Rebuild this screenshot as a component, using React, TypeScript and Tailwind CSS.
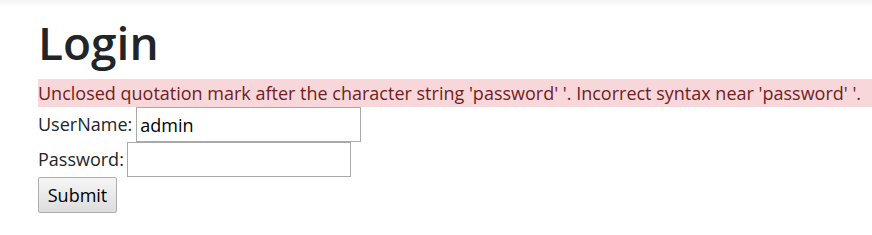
import React from "react";

export default function App() {
  return (
    <div className="w-[872px] h-[235px] bg-white overflow-hidden" style={{ fontFamily: '"Open Sans", "Noto Sans", sans-serif' }}>
      <div className="h-[6px] bg-gradient-to-b from-[#f2f2f2] to-white" />
      <div className="pl-[38px]">
        <h1 className="text-[46px] leading-[73px] text-[#212529] font-semibold h-[73px]">Login</h1>
        <div className="bg-[#f8d7da] text-[#721c24] text-[18px] leading-[28px] h-[28px] whitespace-nowrap">
          Unclosed quotation mark after the character string 'password' '. Incorrect syntax near 'password' '.
        </div>
        <div className="flex items-center h-[35px] text-[18px] text-[#212529]">
          <span>UserName:</span>
          <input
            defaultValue="admin"
            className="ml-[4px] w-[225px] h-[35px] border border-[#a9a9a9] px-[3px] text-[18px] text-black outline-none"
            style={{ fontFamily: '"Open Sans", sans-serif' }}
          />
        </div>
        <div className="flex items-center h-[35px] text-[18px] text-[#212529]">
          <span>Password:</span>
          <input
            type="password"
            className="ml-[3px] w-[224px] h-[35px] border border-[#a9a9a9] px-[3px] text-[18px] outline-none"
          />
        </div>
        <button className="w-[79px] h-[36px] border border-[#adadad] rounded-[2px] bg-gradient-to-b from-[#f6f6f6] to-[#dddddd] text-[18px] text-black">
          Submit
        </button>
      </div>
    </div>
  );
}
